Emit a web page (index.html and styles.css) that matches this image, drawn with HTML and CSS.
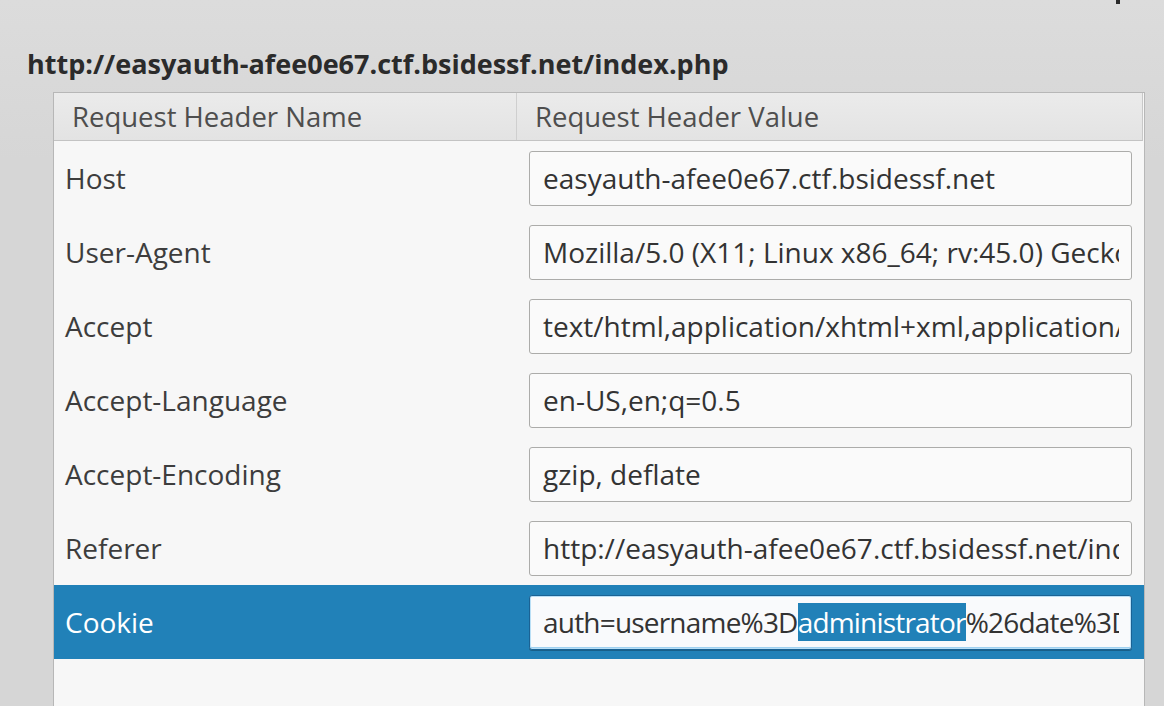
FILE: index.html
```html
<!DOCTYPE html>
<html lang="en">
<head>
<meta charset="utf-8">
<title>Tamper Data</title>
<link rel="stylesheet" href="styles.css">
</head>
<body>
<div class="page">
  <span class="title-tail" aria-hidden="true"></span>
  <div class="url">http://easyauth-afee0e67.ctf.bsidessf.net/index.php</div>
  <div class="panel">
    <div class="thead">
      <div class="th th-name">Request Header Name</div>
      <div class="th th-value">Request Header Value</div>
    </div>
    <div class="row">
      <div class="name">Host</div>
      <div class="cell"><div class="entry"><div class="text">easyauth-afee0e67.ctf.bsidessf.net</div></div></div>
    </div>
    <div class="row">
      <div class="name">User-Agent</div>
      <div class="cell"><div class="entry"><div class="text">Mozilla/5.0 (X11; Linux x86_64; rv:45.0) Gecko/20100101 Firefox/45.0</div></div></div>
    </div>
    <div class="row">
      <div class="name">Accept</div>
      <div class="cell"><div class="entry"><div class="text">text/html,application/xhtml+xml,application/xml;q=0.9,*/*;q=0.8</div></div></div>
    </div>
    <div class="row">
      <div class="name">Accept-Language</div>
      <div class="cell"><div class="entry"><div class="text">en-US,en;q=0.5</div></div></div>
    </div>
    <div class="row">
      <div class="name">Accept-Encoding</div>
      <div class="cell"><div class="entry"><div class="text">gzip, deflate</div></div></div>
    </div>
    <div class="row">
      <div class="name">Referer</div>
      <div class="cell"><div class="entry"><div class="text">http://easyauth-afee0e67.ctf.bsidessf.net/index.php</div></div></div>
    </div>
    <div class="row row-selected">
      <div class="name">Cookie</div>
      <div class="cell"><div class="entry entry-focus"><div class="text text-tight">auth=username%3D<span class="sel">administrator</span>%26date%3D2017-02-12T01%253A22%253A15%252B0000</div></div></div>
    </div>
  </div>
</div>
</body>
</html>
```
FILE: styles.css
```css
html, body {
  margin: 0;
  padding: 0;
  height: 100%;
}

body {
  background: linear-gradient(#dcdcdc, #d6d6d6 160px, #d6d6d6);
  font-family: "Open Sans", "Noto Sans", sans-serif;
  color: #2e3436;
  overflow: hidden;
}

.page {
  position: relative;
  height: 706px;
  padding-top: 46px;
  box-sizing: border-box;
  display: flex;
  flex-direction: column;
}

.title-tail {
  position: absolute;
  left: 1116px;
  top: 0;
  width: 4px;
  height: 4px;
  background: #2a2a2a;
}

.url {
  margin-left: 27px;
  font-size: 27px;
  font-weight: 700;
  line-height: 36px;
  height: 36px;
  margin-bottom: 10px;
  color: #2b2b2b;
  white-space: nowrap;
}

.panel {
  margin-left: 53px;
  width: 1092px;
  flex: 1;
  box-sizing: border-box;
  border: 1px solid #b7b7b7;
  border-bottom: none;
  background: #f7f7f7;
  display: flex;
  flex-direction: column;
}

.thead {
  display: grid;
  grid-template-columns: 463px minmax(0, 1fr);
  height: 48px;
  box-sizing: border-box;
  margin-right: 1px;
  background: linear-gradient(#ebebeb, #e3e3e3);
  border-bottom: 1px solid #c3c3c3;
  border-right: 1px solid #c8c8c8;
}

.th {
  display: flex;
  align-items: center;
  padding-left: 18px;
  font-size: 27.5px;
  color: #4e4e4e;
  white-space: nowrap;
}

.th-name {
  border-right: 1px solid #cfcfcf;
}

.row {
  display: grid;
  grid-template-columns: 463px minmax(0, 1fr);
  height: 74px;
}

.name {
  display: flex;
  align-items: center;
  padding-left: 11px;
  font-size: 28px;
  color: #3d3d3d;
  white-space: nowrap;
}

.cell {
  display: flex;
  align-items: center;
  padding: 0 12px;
  min-width: 0;
}

.entry {
  flex: 1;
  height: 55px;
  box-sizing: border-box;
  border: 1px solid #acacaa;
  border-radius: 3px;
  background: #fafafa;
  padding: 0 12px 0 13px;
  display: flex;
  align-items: center;
  min-width: 0;
}

.text {
  flex: 1;
  min-width: 0;
  overflow: hidden;
  white-space: nowrap;
  font-size: 28px;
  line-height: 38px;
  color: #333333;
}

.text-tight {
  letter-spacing: -0.8px;
}

.row-selected {
  background: #2181b8;
}

.row-selected .name {
  color: #ffffff;
}

.entry-focus {
  border-color: #1a6294;
  background: #f9fafc;
  box-shadow: inset 0 0 0 1px #b9dff6, inset 0 -2px 0 #9fd1f1, 0 1px 0 rgba(0, 0, 0, 0.25);
}

.sel {
  background: #2181b8;
  color: #ffffff;
}
```
